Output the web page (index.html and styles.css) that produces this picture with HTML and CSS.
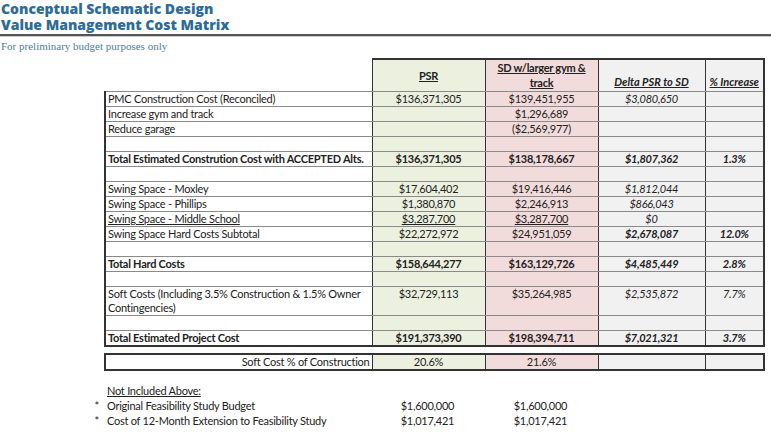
FILE: index.html
```html
<!DOCTYPE html>
<html>
<head>
<meta charset="utf-8">
<link rel="stylesheet" href="styles.css">
</head>
<body>
<header class="doc-head">
  <h1 class="title">Conceptual Schematic Design<br>Value Management Cost Matrix</h1>
  <div class="rule"></div>
  <p class="subtitle">For preliminary budget purposes only</p>
</header>

<table class="matrix">
  <colgroup>
    <col class="c-label"><col class="c-psr"><col class="c-sd"><col class="c-delta"><col class="c-pct">
  </colgroup>
  <tr class="head">
    <td class="blank-head"></td>
    <td class="psr hmid"><u>PSR</u></td>
    <td class="sd htop"><u>SD w/larger gym &amp;<br>track</u></td>
    <td class="delta hbot"><u><i>Delta PSR to SD</i></u></td>
    <td class="pct hbot"><u><i>% Increase</i></u></td>
  </tr>
  <tr><td class="lbl">PMC Construction Cost (Reconciled)</td><td class="psr">$136,371,305</td><td class="sd">$139,451,955</td><td class="delta it">$3,080,650</td><td class="pct"></td></tr>
  <tr><td class="lbl">Increase gym and track</td><td class="psr"></td><td class="sd">$1,296,689</td><td class="delta"></td><td class="pct"></td></tr>
  <tr><td class="lbl">Reduce garage</td><td class="psr"></td><td class="sd">($2,569,977)</td><td class="delta"></td><td class="pct"></td></tr>
  <tr><td class="lbl"></td><td class="psr"></td><td class="sd"></td><td class="delta"></td><td class="pct"></td></tr>
  <tr class="bold"><td class="lbl">Total Estimated Constrution Cost with ACCEPTED Alts.</td><td class="psr">$136,371,305</td><td class="sd">$138,178,667</td><td class="delta it">$1,807,362</td><td class="pct it">1.3%</td></tr>
  <tr><td class="lbl"></td><td class="psr"></td><td class="sd"></td><td class="delta"></td><td class="pct"></td></tr>
  <tr><td class="lbl">Swing Space - Moxley</td><td class="psr">$17,604,402</td><td class="sd">$19,416,446</td><td class="delta it">$1,812,044</td><td class="pct"></td></tr>
  <tr><td class="lbl">Swing Space - Phillips</td><td class="psr">$1,380,870</td><td class="sd">$2,246,913</td><td class="delta it">$866,043</td><td class="pct"></td></tr>
  <tr><td class="lbl"><u>Swing Space - Middle School</u></td><td class="psr"><u>$3,287,700</u></td><td class="sd"><u>$3,287,700</u></td><td class="delta it">$0</td><td class="pct"></td></tr>
  <tr><td class="lbl">Swing Space Hard Costs Subtotal</td><td class="psr">$22,272,972</td><td class="sd">$24,951,059</td><td class="delta it b">$2,678,087</td><td class="pct it b">12.0%</td></tr>
  <tr><td class="lbl"></td><td class="psr"></td><td class="sd"></td><td class="delta"></td><td class="pct"></td></tr>
  <tr class="bold"><td class="lbl">Total Hard Costs</td><td class="psr">$158,644,277</td><td class="sd">$163,129,726</td><td class="delta it">$4,485,449</td><td class="pct it">2.8%</td></tr>
  <tr><td class="lbl"></td><td class="psr"></td><td class="sd"></td><td class="delta"></td><td class="pct"></td></tr>
  <tr class="tall"><td class="lbl">Soft Costs (Including 3.5% Construction &amp; 1.5% Owner Contingencies)</td><td class="psr">$32,729,113</td><td class="sd">$35,264,985</td><td class="delta it">$2,535,872</td><td class="pct it">7.7%</td></tr>
  <tr><td class="lbl"></td><td class="psr"></td><td class="sd"></td><td class="delta"></td><td class="pct"></td></tr>
  <tr class="bold last"><td class="lbl">Total Estimated Project Cost</td><td class="psr">$191,373,390</td><td class="sd">$198,394,711</td><td class="delta it">$7,021,321</td><td class="pct it">3.7%</td></tr>
</table>

<table class="matrix ratio">
  <colgroup>
    <col class="c-label"><col class="c-psr"><col class="c-sd"><col class="c-delta"><col class="c-pct">
  </colgroup>
  <tr class="last first"><td class="lbl right">Soft Cost % of Construction</td><td class="psr">20.6%</td><td class="sd">21.6%</td><td class="delta"></td><td class="pct"></td></tr>
</table>

<section class="extras">
  <div class="extras-title"><u>Not Included Above:</u></div>
  <div class="extra-row"><span class="bullet">*</span><span class="extra-lbl">Original Feasibility Study Budget</span><span class="extra-val">$1,600,000</span><span class="extra-val">$1,600,000</span></div>
  <div class="extra-row"><span class="bullet">*</span><span class="extra-lbl">Cost of 12-Month Extension to Feasibility Study</span><span class="extra-val">$1,017,421</span><span class="extra-val">$1,017,421</span></div>
</section>
</body>
</html>
```

FILE: styles.css
```css
html, body {
  margin: 0;
  padding: 0;
  background: #ffffff;
}

body {
  font-family: "Lato", "Open Sans", sans-serif;
  color: #222;
  width: 771px;
  height: 441px;
  overflow: hidden;
}

.doc-head {
  padding-top: 1px;
}

.title {
  margin: 0;
  padding-left: 1px;
  font-family: "Open Sans", "Lato", sans-serif;
  font-weight: 800;
  font-size: 14px;
  line-height: 16px;
  color: #2c6c99;
}

.rule {
  margin-top: 1px;
  height: 2px;
  background: #555;
  border-bottom: 1px solid #c8c8c8;
}

.subtitle {
  margin: 3px 0 0 1px;
  font-family: "Liberation Serif", "DejaVu Serif", serif;
  font-size: 11px;
  line-height: 13px;
  color: #4d7ea3;
}

.matrix {
  border-collapse: collapse;
  margin-left: 104px;
  margin-top: 5px;
  width: 659px;
  table-layout: fixed;
  font-size: 11px;
  letter-spacing: -0.25px;
}

.matrix.ratio {
  margin-top: 6px;
}

.c-label { width: 267px; }
.c-psr { width: 113px; }
.c-sd { width: 113px; }
.c-delta { width: 107px; }
.c-pct { width: 59px; }

.matrix td {
  height: 14px;
  padding: 0 2px;
  line-height: 14px;
  border-top: 1px solid #8a8a8a;
  border-bottom: 1px solid #8a8a8a;
  border-left: 1px solid #333;
  border-right: 1px solid #333;
  text-align: center;
  vertical-align: top;
  white-space: nowrap;
  overflow: hidden;
}

.matrix td.lbl {
  text-align: left;
  border-left: 2px solid #333;
  background: #fff;
}

.matrix td.lbl.right {
  text-align: right;
}

.matrix td.pct {
  border-right: 2px solid #333;
}

.psr { background: #ecf1df; }
.sd { background: #f2dcdb; }
.delta, .pct { background: #f1f1f1; }

.it { font-style: italic; }
.b { font-weight: 700; }
.bold td { font-weight: 700; }

.matrix tr.head td {
  height: 29px;
  border-top: 2px solid #333;
  font-weight: 700;
  line-height: 15px;
}

.matrix tr.head td.blank-head {
  border-top: none;
  border-left: none;
  background: transparent;
}

.matrix tr.head td.hmid { vertical-align: middle; padding-bottom: 1px; }
.matrix tr.head td.htop { vertical-align: top; padding-top: 0; }
.matrix tr.head td.hbot { vertical-align: bottom; padding-bottom: 2px; letter-spacing: 0; }

.matrix tr.tall td {
  height: 28px;
}

.matrix tr.tall td.lbl {
  white-space: normal;
}

.matrix tr.last td {
  border-bottom: 2px solid #333;
}

.matrix tr.first td {
  border-top: 2px solid #333;
}

.extras {
  margin-top: 12px;
  font-size: 11px;
  line-height: 15px;
  letter-spacing: -0.25px;
}

.extras-title {
  padding-left: 107px;
}

.extra-row {
  display: grid;
  grid-template-columns: 104px 267px 113px 113px;
}

.bullet {
  text-align: right;
  padding-right: 5px;
}

.extra-lbl {
  padding-left: 3px;
}

.extra-val {
  text-align: center;
}
```
